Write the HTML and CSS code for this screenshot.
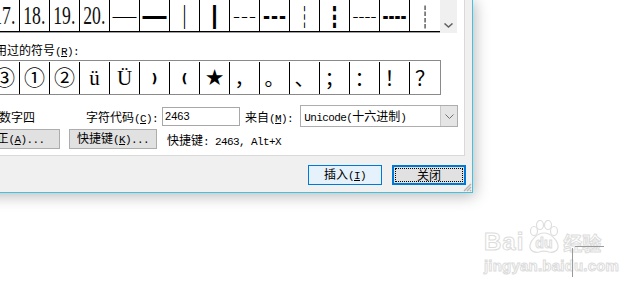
FILE: index.html
```html
<!DOCTYPE html>
<html lang="zh-CN">
<head>
  <meta charset="UTF-8">
  <title>符号</title>
  <link rel="stylesheet" href="styles.css">
</head>
<body>
  <div class="dialog">
    <div class="panel">
      <div class="grid-wrap">
        <div class="grid">
          <div class="cell"><span class="num">16.</span></div>
          <div class="cell"><span class="num">17.</span></div>
          <div class="cell"><span class="num">18.</span></div>
          <div class="cell"><span class="num">19.</span></div>
          <div class="cell"><span class="num">20.</span></div>
          <div class="cell box">─</div>
          <div class="cell box">━</div>
          <div class="cell box thin">│</div>
          <div class="cell box">┃</div>
          <div class="cell box">┄</div>
          <div class="cell box">┅</div>
          <div class="cell box thin">┆</div>
          <div class="cell box">┇</div>
          <div class="cell box">┈</div>
          <div class="cell box">┉</div>
          <div class="cell box thin">┊</div>
        </div>
        <div class="vscroll">
          <svg width="9" height="5" viewBox="0 0 9 5"><polyline points="0.5,0.5 4.5,4 8.5,0.5" fill="none" stroke="#606060" stroke-width="1.5"/></svg>
        </div>
      </div>

      <div class="label">近期使用过的符号<span class="hw">(<u>R</u>):</span></div>

      <div class="recent">
        <div class="cell sym">④</div>
        <div class="cell sym circ">③</div>
        <div class="cell sym circ">①</div>
        <div class="cell sym circ">②</div>
        <div class="cell sym serif">ü</div>
        <div class="cell sym serif">Ü</div>
        <div class="cell sym paren">)</div>
        <div class="cell sym paren">(</div>
        <div class="cell sym star">★</div>
        <div class="cell sym">，</div>
        <div class="cell sym">。</div>
        <div class="cell sym">、</div>
        <div class="cell sym">；</div>
        <div class="cell sym">：</div>
        <div class="cell sym">！</div>
        <div class="cell sym">？</div>
      </div>

      <div class="code-row">
        <span class="name">带圈数字四</span>
        <span class="lbl">字符代码<span class="hw">(<u>C</u>):</span></span>
        <span class="field">2463</span>
        <span class="lbl from">来自<span class="hw">(<u>M</u>):</span></span>
        <span class="select">
          <span class="select-text"><span class="hw">Unicode(</span>十六进制<span class="hw">)</span></span>
          <span class="drop"><svg width="9" height="5" viewBox="0 0 9 5"><polyline points="0.5,0.5 4.5,4.5 8.5,0.5" fill="none" stroke="#707070" stroke-width="1"/></svg></span>
        </span>
      </div>

      <div class="btn-row">
        <button class="btn autocorrect">自动更正<span class="hw">(<u>A</u>)...</span></button>
        <button class="btn shortcut">快捷键<span class="hw">(<u>K</u>)...</span></button>
        <span class="keys">快捷键<span class="hw">: 2463, Alt+X</span></span>
      </div>
    </div>

    <div class="footer">
      <button class="btn wide primary">插入<span class="hw">(<u>I</u>)</span></button>
      <button class="btn wide focused">关闭</button>
    </div>

    <svg class="grip" width="9" height="9" viewBox="0 0 9 9">
      <path d="M8 1 L1 8 M8 4 L4 8 M8 7 L7 8" stroke="#b4b4b4" stroke-width="1.4"/>
    </svg>
  </div>

  <div class="watermark">
    <div class="wm-logo">
      <span class="wm-bai">Bai</span>
      <span class="wm-paw">
        <svg width="36" height="34" viewBox="0 0 36 34">
          <g fill="#fff" stroke="#dedede" stroke-width="1.2">
            <ellipse cx="8" cy="11" rx="3.5" ry="4.5"/>
            <ellipse cx="14" cy="5" rx="3.5" ry="4.5"/>
            <ellipse cx="22" cy="5" rx="3.5" ry="4.5"/>
            <ellipse cx="28" cy="11" rx="3.5" ry="4.5"/>
            <path d="M18 13 C11 13 5 20 4 25 C3 31 9 33 13 32 C16 31 20 31 23 32 C27 33 33 31 32 25 C31 20 25 13 18 13 Z"/>
          </g>
        </svg>
        <span class="wm-du">du</span>
      </span>
      <span class="wm-cn">经验</span>
    </div>
    <div class="wm-url">jingyan.baidu.com</div>
  </div>
  <div class="cross-h"></div>
  <div class="cross-v"></div>
</body>
</html>
```

FILE: styles.css
```css
body {
  margin: 0;
  width: 634px;
  height: 287px;
  overflow: hidden;
  position: relative;
  background-color: #fff;
  color: #000;
  font-family: "Noto Sans CJK SC", sans-serif;
  font-size: 12px;
}

u {
  text-decoration: underline;
  text-underline-offset: 1px;
}

.hw {
  font-family: "Liberation Mono", monospace;
  font-size: 11px;
  letter-spacing: -0.6px;
}

/* dialog frame */
.dialog {
  position: relative;
  width: 533px;
  box-sizing: border-box;
  margin: -2px 0 0 -60px;
  padding: 0 7px;
  background-color: #f0f0f0;
  border: 1px solid #3fc3df;
  box-shadow: 2px 3px 14px rgba(0, 0, 0, 0.28);
}

.panel {
  background-color: #fff;
  border: 1px solid #d9d9d9;
  padding: 0 0 6px 10px;
}

/* symbol grid */
.grid-wrap {
  display: flex;
  align-items: flex-start;
}

.grid {
  display: flex;
  border-left: 1px solid #000;
  border-bottom: 1px solid #a0a0a0;
}

.grid .cell {
  width: 29px;
  height: 31px;
  border-right: 1px solid #000;
  border-bottom: 1px solid #000;
  display: flex;
  align-items: center;
  justify-content: center;
  overflow: hidden;
}

.grid .cell:last-child {
  width: 30px;
  border-right: 0;
}

.num {
  display: inline-block;
  font-family: "Liberation Serif", serif;
  font-size: 26px;
  line-height: 1;
  transform: scaleX(0.68);
  color: #111;
}

.box {
  font-family: "Noto Sans CJK SC", sans-serif;
  font-size: 24px;
  line-height: 1;
  color: #000;
}

.box.thin {
  font-weight: bold;
}

.vscroll {
  width: 17px;
  height: 33px;
  background-color: #f0f0f0;
  display: flex;
  justify-content: center;
  align-items: flex-start;
  padding-top: 23px;
  box-sizing: border-box;
}

.vscroll svg {
  display: block;
}

/* recently used */
.label {
  margin-top: 9px;
  height: 16px;
  line-height: 16px;
}

.recent {
  display: flex;
  width: 482px;
  box-sizing: border-box;
  height: 35px;
  margin-top: 2px;
  border: 1px solid #8a8a8a;
}

.recent .cell {
  width: 29px;
  height: 32px;
  margin-top: 1px;
  border-right: 1px solid #000;
  display: flex;
  align-items: center;
  justify-content: center;
  overflow: hidden;
}

.recent .cell:last-child {
  width: 30px;
  border-right: 0;
}

.sym {
  font-family: "Noto Sans CJK SC", sans-serif;
  font-size: 20px;
  line-height: 1;
}

.sym.circ {
  font-family: "DejaVu Serif", serif;
  font-size: 21px;
}

.sym.serif {
  font-family: "Liberation Serif", serif;
  font-size: 21px;
}

.sym.paren {
  font-family: "DejaVu Sans", sans-serif;
  font-size: 13px;
  font-weight: bold;
}

.sym.star {
  font-family: "DejaVu Sans", sans-serif;
  font-size: 22px;
}

/* character code row */
.code-row {
  display: flex;
  align-items: center;
  height: 22px;
  margin-top: 10px;
  white-space: nowrap;
}

.name {
  width: 111px;
  padding-left: 16px;
}

.field {
  width: 78px;
  height: 19px;
  box-sizing: border-box;
  margin-left: 4px;
  padding-left: 2px;
  border: 1px solid #a8a8a8;
  font-family: "Liberation Sans", sans-serif;
  font-size: 11px;
  line-height: 17px;
}

.from {
  margin-left: 5px;
}

.select {
  display: flex;
  width: 158px;
  height: 22px;
  box-sizing: border-box;
  margin-left: 7px;
  border: 1px solid #adadad;
  background-color: #fff;
}

.select-text {
  flex: 1;
  padding-left: 3px;
  line-height: 20px;
}

.drop {
  width: 16px;
  background-color: #e5e5e5;
  border-left: 1px solid #c8c8c8;
  display: flex;
  align-items: center;
  justify-content: center;
}

/* buttons */
.btn-row {
  display: flex;
  align-items: center;
  height: 20px;
  margin-top: 2px;
  white-space: nowrap;
}

.btn {
  height: 20px;
  box-sizing: border-box;
  padding: 0;
  background-color: #e1e1e1;
  border: 1px solid #adadad;
  color: #000;
  font-family: "Noto Sans CJK SC", sans-serif;
  font-size: 12px;
  line-height: 16px;
  white-space: nowrap;
}

.autocorrect {
  width: 115px;
  margin-left: -14px;
}

.shortcut {
  width: 88px;
  margin-left: 9px;
}

.keys {
  margin-left: 10px;
}

.footer {
  display: flex;
  justify-content: flex-end;
  gap: 10px;
  padding: 9px 0 7px;
  margin-right: -1px;
}

.wide {
  width: 74px;
}

.primary {
  background-color: #e5f1fb;
  border-color: #0078d7;
}

.focused {
  border: 2px solid #0078d7;
  outline: 1px dotted #000;
  outline-offset: -4px;
}

.grip {
  position: absolute;
  right: 0;
  bottom: 0;
}

/* watermark */
.watermark {
  position: absolute;
  left: 484px;
  top: 219px;
  color: #fff;
  -webkit-text-stroke: 1px #dcdcdc;
}

.wm-logo {
  display: flex;
  align-items: flex-end;
  height: 35px;
}

.wm-bai {
  font-family: "Liberation Sans", sans-serif;
  font-weight: bold;
  font-size: 24px;
  line-height: 24px;
  letter-spacing: 1px;
}

.wm-paw {
  position: relative;
  width: 36px;
  height: 34px;
  margin-left: 2px;
}

.wm-paw svg {
  display: block;
}

.wm-du {
  position: absolute;
  left: 9px;
  top: 14px;
  font-family: "Liberation Sans", sans-serif;
  font-weight: bold;
  font-size: 14px;
  line-height: 18px;
}

.wm-cn {
  font-family: "Noto Sans CJK SC", sans-serif;
  font-weight: bold;
  font-size: 19px;
  line-height: 22px;
  margin-left: 1px;
}

.wm-url {
  margin-top: 3px;
  font-family: "Liberation Sans", sans-serif;
  font-weight: bold;
  font-size: 15px;
  line-height: 17px;
  letter-spacing: 0.2px;
}

.cross-h {
  position: absolute;
  left: 575px;
  top: 246px;
  width: 29px;
  height: 1px;
  background-color: #9a9a9a;
}

.cross-v {
  position: absolute;
  left: 572px;
  top: 248px;
  width: 1px;
  height: 29px;
  background-color: #9a9a9a;
}
```
